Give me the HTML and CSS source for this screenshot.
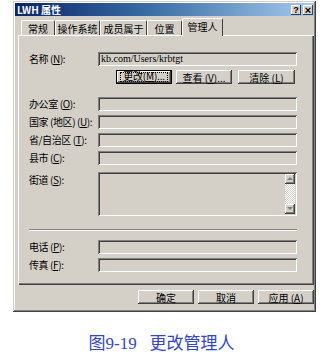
FILE: index.html
```html
<!DOCTYPE html>
<html>
<head>
<meta charset="utf-8">
<link rel="stylesheet" href="styles.css">
</head>
<body>
<div class="dialog">
  <div class="titlebar">
    <span class="title">LWH 属性</span>
    <div class="tbtns">
      <span class="tbtn">?</span>
      <span class="tbtn close">×</span>
    </div>
  </div>
  <div class="tabs">
    <div class="tab t1">常规</div>
    <div class="tab t2">操作系统</div>
    <div class="tab t3">成员属于</div>
    <div class="tab t4">位置</div>
    <div class="tab sel">管理人</div>
  </div>
  <div class="panel">
    <div class="row r-name">
      <span class="lbl">名称 (<u>N</u>):</span>
      <div class="field"><span class="ftext">kb.com/Users/krbtgt</span></div>
    </div>
    <div class="btnrow">
      <div class="btn def"><span class="focus"><span class="ftxt">更改(<u>M</u>)...</span></span></div>
      <div class="btn b2">查看 (<u>V</u>)...</div>
      <div class="btn b3">清除 (<u>L</u>)</div>
    </div>
    <div class="row r-first">
      <span class="lbl">办公室 (<u>O</u>):</span>
      <div class="field"></div>
    </div>
    <div class="row r-next">
      <span class="lbl">国家 (地区) (<u>U</u>):</span>
      <div class="field"></div>
    </div>
    <div class="row r-next">
      <span class="lbl">省/自治区 (<u>T</u>):</span>
      <div class="field"></div>
    </div>
    <div class="row r-next">
      <span class="lbl">县市 (<u>C</u>):</span>
      <div class="field"></div>
    </div>
    <div class="row r-street">
      <span class="lbl top">街道 (<u>S</u>):</span>
      <div class="field area">
        <div class="scroll">
          <div class="sbtn"><svg width="6" height="4" viewBox="0 0 6 4"><path d="M3 0 L6 3 L0 3 Z" fill="#808080"/></svg></div>
          <div class="track"></div>
          <div class="sbtn"><svg width="6" height="4" viewBox="0 0 6 4"><path d="M0 0 L6 0 L3 3 Z" fill="#808080"/></svg></div>
        </div>
      </div>
    </div>
    <div class="sep"></div>
    <div class="row r-phone">
      <span class="lbl">电话 (<u>P</u>):</span>
      <div class="field"></div>
    </div>
    <div class="row r-next">
      <span class="lbl">传真 (<u>F</u>):</span>
      <div class="field"></div>
    </div>
  </div>
  <div class="footer">
    <div class="btn fb">确定</div>
    <div class="btn fb">取消</div>
    <div class="btn fb">应用 (<u>A</u>)</div>
  </div>
</div>
<div class="caption">图9-19&nbsp;&nbsp;&nbsp;更改管理人</div>
</body>
</html>
```
FILE: styles.css
```css
html, body {
  margin: 0;
  padding: 0;
  background: #ffffff;
}
body {
  width: 323px;
  height: 355px;
  overflow: hidden;
  font-family: "Noto Sans CJK SC", "Liberation Sans", sans-serif;
  font-size: 10px;
  color: #000;
}
.dialog {
  margin: 1px 0 0 13px;
  width: 303px;
  height: 311px;
  box-sizing: border-box;
  padding: 2px;
  background: #d4d0c8;
  box-shadow: inset -1px -1px #404040, inset 1px 1px #d4d0c8, inset -2px -2px #808080, inset 2px 2px #ffffff;
  display: flex;
  flex-direction: column;
}
.titlebar {
  height: 13px;
  background: linear-gradient(to right, #0a246a, #3a6ea5 45%, #a6caf0);
  display: flex;
  align-items: center;
  justify-content: space-between;
  padding: 0 1px 0 2px;
}
.title {
  color: #fff;
  font-weight: bold;
  font-size: 10px;
  line-height: 13px;
}
.tbtns {
  display: flex;
  gap: 2px;
}
.tbtn {
  width: 10px;
  height: 10px;
  background: #d4d0c8;
  box-shadow: inset -1px -1px #404040, inset 1px 1px #fff;
  font-family: "Liberation Sans", sans-serif;
  font-weight: bold;
  font-size: 9px;
  line-height: 10px;
  text-align: center;
}
.tbtn.close {
  font-size: 11px;
}
.tabs {
  margin-top: 2px;
  height: 17px;
  display: flex;
  align-items: flex-end;
  padding-left: 6px;
}
.tab {
  height: 15px;
  box-sizing: border-box;
  display: flex;
  align-items: center;
  justify-content: center;
  border-left: 1px solid #fff;
  border-top: 1px solid #fff;
  border-right: 1px solid #404040;
  border-radius: 2px 2px 0 0;
  font-size: 10px;
}
.t1 { width: 34px; }
.t2 { width: 45px; }
.t3 { width: 47px; }
.t4 { width: 35px; }
.tab.sel {
  width: 41px;
  height: 18px;
  margin-bottom: -1px;
  background: #d4d0c8;
  position: relative;
  z-index: 1;
  padding-bottom: 2px;
}
.panel {
  margin-left: 3px;
  height: 250px;
  box-sizing: border-box;
  padding: 17px 17px 0 11px;
  box-shadow: inset 1px 1px #fff, inset -1px -1px #404040, inset -2px -2px #808080;
  display: flex;
  flex-direction: column;
}
.row {
  display: flex;
  align-items: center;
  height: 14px;
}
.lbl {
  width: 69px;
  flex: none;
  white-space: nowrap;
  font-size: 10px;
  line-height: 12px;
  letter-spacing: -0.4px;
}
.lbl.top {
  align-self: flex-start;
  margin-top: 2px;
}
.field {
  flex: 1;
  height: 14px;
  box-sizing: border-box;
  background: #d4d0c8;
  box-shadow: inset 1px 1px #808080, inset -1px -1px #fff, inset 2px 2px #404040, inset -2px -2px #d4d0c8;
  display: flex;
  align-items: center;
  padding-left: 3px;
}
.ftext {
  font-family: "Liberation Serif", serif;
  font-size: 10px;
  line-height: 12px;
}
.r-first { margin-top: 13px; }
.r-next { margin-top: 4px; }
.r-street { margin-top: 7px; height: 44px; align-items: flex-start; }
.field.area {
  height: 44px;
  padding: 2px 2px 2px 0;
  justify-content: flex-end;
  align-items: stretch;
}
.scroll {
  width: 10px;
  display: flex;
  flex-direction: column;
}
.sbtn {
  height: 10px;
  background: #d4d0c8;
  box-shadow: inset -1px -1px #404040, inset 1px 1px #fff, inset -2px -2px #808080;
  display: flex;
  align-items: center;
  justify-content: center;
}
.track {
  flex: 1;
  background-color: #ffffff;
  background-image: linear-gradient(45deg, #d4d0c8 25%, transparent 25%, transparent 75%, #d4d0c8 75%), linear-gradient(45deg, #d4d0c8 25%, transparent 25%, transparent 75%, #d4d0c8 75%);
  background-size: 2px 2px;
  background-position: 0 0, 1px 1px;
}
.sep {
  margin-top: 13px;
  height: 2px;
  box-sizing: border-box;
  border-top: 1px solid #808080;
  border-bottom: 1px solid #ffffff;
}
.r-phone { margin-top: 9px; }
.btnrow {
  margin-top: 4px;
  margin-left: 87px;
  display: flex;
  gap: 4px;
}
.btn {
  width: 56px;
  height: 14px;
  box-sizing: border-box;
  background: #d4d0c8;
  box-shadow: inset -1px -1px #404040, inset 1px 1px #fff, inset -2px -2px #808080;
  display: flex;
  align-items: center;
  justify-content: center;
  font-size: 10px;
  white-space: nowrap;
}
.btn.b3 { margin-left: 2px; width: 57px; }
.btn.def {
  box-shadow: inset 0 0 0 1px #000, inset -2px -2px #404040, inset 2px 2px #fff, inset -3px -3px #808080;
}
.focus {
  width: 48px;
  height: 10px;
  box-sizing: border-box;
  border: 1px dotted #000;
  display: flex;
  justify-content: center;
  align-items: flex-start;
}
.ftxt {
  line-height: 10px;
  margin-top: -2px;
  letter-spacing: -0.2px;
}
.footer {
  margin-top: 5px;
  display: flex;
  justify-content: flex-end;
  gap: 4px;
}
.caption {
  margin-top: 22px;
  text-align: center;
  padding-right: 0;
  color: #3344cc;
  font-family: "Liberation Serif", "Noto Sans CJK SC", serif;
  font-size: 17px;
  line-height: 20px;
}
u {
  text-decoration: underline;
}
```
